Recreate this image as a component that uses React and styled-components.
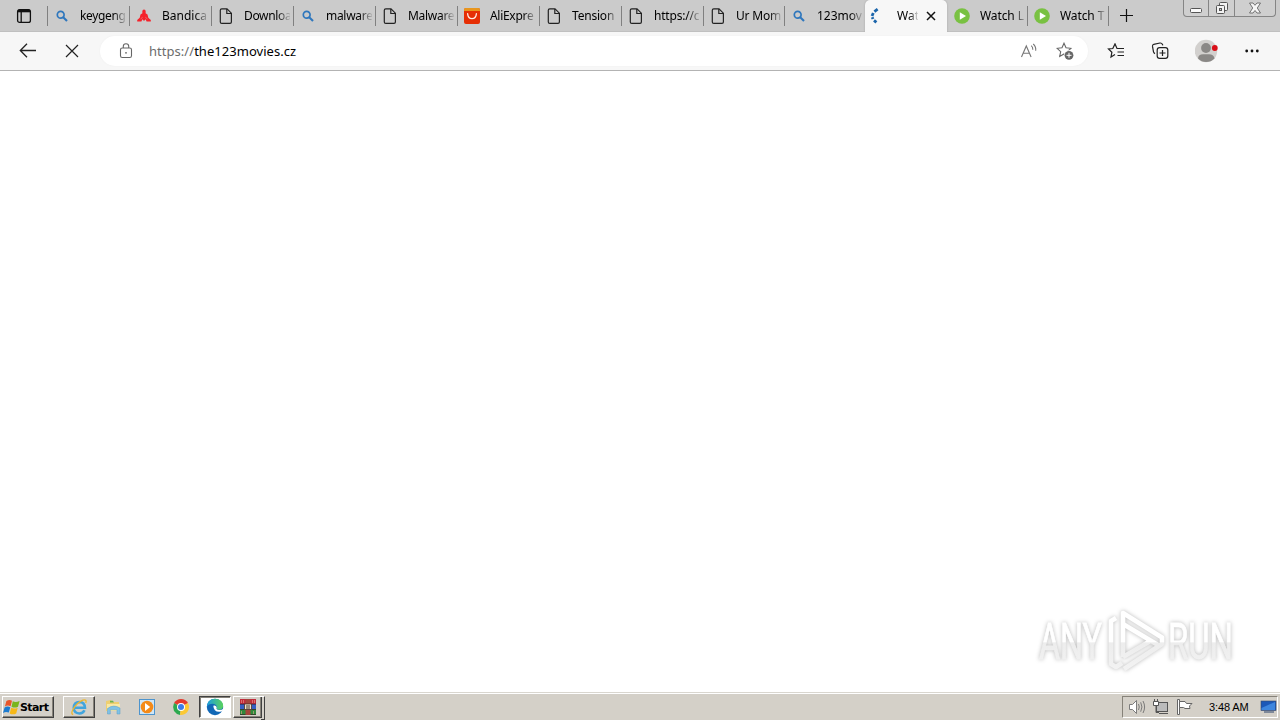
import React from 'react';
import styled, { createGlobalStyle, css } from 'styled-components';

const GlobalStyle = createGlobalStyle`
    * { box-sizing: border-box; }
    body {
        margin: 0;
        background: #fff;
        overflow: hidden;
        font-family: "Noto Sans", "Open Sans", sans-serif;
    }
    svg { display: block; flex: none; }
`

const Screen = styled.div`
    width: 1280px;
    height: 720px;
    display: flex;
    flex-direction: column;
    position: relative;
    overflow: hidden;
`

// tab strip
const TabStrip = styled.div`
    height: 32px;
    flex: none;
    display: flex;
    align-items: flex-start;
    background: #cbcbcb;
    border-bottom: 1px solid #c0c0c0;
`
const TabMenu = styled.div`
    width: 47px;
    height: 32px;
    padding: 8px 0 0 16px;
`
const TabBox = styled.div`
    width: ${p => p.$width}px;
    height: 32px;
    flex: none;
    display: flex;
    align-items: center;
    position: relative;
    padding-left: 6px;
    ${p => p.$line && css`
        &::before {
            content: '';
            position: absolute;
            left: 0;
            top: 6px;
            height: 20px;
            width: 1px;
            background: #808080;
        }
    `}
    ${p => p.$active && css`
        background: #f7f7f7;
        border-radius: 5px 5px 0 0;
        padding-left: 3px;
        box-shadow: 0 0 2px #a0a0a0;
        clip-path: inset(-2px -2px 0 -2px);
    `}
`
const TabEnd = styled(TabBox)`
    padding: 0;
`
const TabIcon = styled.div`
    width: 18px;
    height: 18px;
    flex: none;
    display: flex;
    align-items: center;
    justify-content: center;
`
const TabText = styled.span`
    margin-left: ${p => (p.$active ? 11 : 9)}px;
    width: ${p => (p.$active ? 21 : 46)}px;
    white-space: nowrap;
    font-size: 12px;
    line-height: 18px;
    letter-spacing: ${p => p.$spacing || 0}px;
    color: #000;
    mask-image: linear-gradient(to right, #000 ${p => (p.$active ? 60 : 72)}%, rgba(0, 0, 0, .1));
`
const CloseTab = styled.div`
    margin-left: 8px;
`
const NewTab = styled.div`
    height: 32px;
    padding: 9px 0 0 10px;
    flex: 1;
`
const WindowButtons = styled.div`
    display: flex;
    height: 17px;
    margin-right: 4px;
    border: 1px solid #858585;
    border-top: 0;
    border-radius: 0 0 4px 4px;
    background: #cfcfcf;
`
const WindowButton = styled.div`
    width: ${p => p.$width}px;
    display: flex;
    justify-content: center;
    & + & { border-left: 1px solid #858585; }
`

// toolbar
const Toolbar = styled.div`
    height: 39px;
    flex: none;
    display: flex;
    align-items: center;
    background: #f7f7f7;
    border-bottom: 1px solid #b3b3b3;
    padding-left: 18px;
`
const ToolButton = styled.div`
    width: ${p => p.$width || 44}px;
    display: flex;
    align-items: center;
    padding-left: ${p => p.$pad || 0}px;
`
const AddressBar = styled.div`
    width: 988px;
    height: 30px;
    border-radius: 15px;
    background: #fff;
    box-shadow: 0 0 2px #eee;
    display: flex;
    align-items: center;
    padding-left: 19px;
    padding-right: 14px;
`
const Url = styled.div`
    flex: 1;
    margin-left: 15px;
    font-size: 13px;
    line-height: 18px;
    letter-spacing: 0.04px;
    color: #000;
    white-space: nowrap;
    span { color: #6c6c6c; }
`
const Content = styled.main`
    flex: 1;
    background: #fff;
`
const Watermark = styled.svg`
    position: absolute;
    left: 1030px;
    top: 602px;
    filter: drop-shadow(0 0 2px rgba(0, 0, 0, .28));
`

// taskbar
const TaskBar = styled.div`
    height: 28px;
    flex: none;
    display: flex;
    align-items: flex-start;
    background: #d4d0c8;
    border-top: 1px solid #d9d6cf;
    box-shadow: inset 0 1px 0 #fff;
    padding: 3px 2px 0 2px;
`
const raised = css`
    border: 1px solid;
    border-color: #fff #404040 #404040 #fff;
    box-shadow: inset -1px -1px 0 #868279;
`
const StartButton = styled.div`
    width: 52px;
    height: 22px;
    display: flex;
    align-items: center;
    font-family: "DejaVu Sans", sans-serif;
    font-weight: bold;
    font-size: 11px;
    letter-spacing: -0.6px;
    color: #000;
    ${raised}
`
const TaskList = styled.div`
    display: flex;
    margin-left: 9px;
    gap: 2px;
    flex: 1;
`
const TaskItem = styled.div`
    width: 32px;
    height: 22px;
    display: flex;
    align-items: center;
    justify-content: center;
    position: relative;
    ${p => p.$look === 'raised' && raised}
    ${p => p.$look === 'pressed' && css`
        background: #fff;
        border: 1px solid;
        border-color: #404040 #fff #fff #404040;
        box-shadow: inset 1px 1px 0 #868279;
    `}
    ${p => p.$look === 'stack' && css`
        ${raised}
        width: 29px;
        margin-right: 3px;
        &::after {
            content: '';
            position: absolute;
            top: -1px;
            right: -4px;
            width: 3px;
            height: 22px;
            border-right: 1px solid #404040;
            border-top: 1px solid #fff;
            border-bottom: 1px solid #404040;
        }
    `}
`
const Tray = styled.div`
    width: 156px;
    height: 22px;
    display: flex;
    align-items: center;
    padding-left: 5px;
    border: 1px solid;
    border-color: #868279 #fff #fff #868279;
`
const Clock = styled.div`
    width: 51px;
    margin-left: 15px;
    font-family: "Liberation Sans", Arial, sans-serif;
    font-size: 11px;
    letter-spacing: -0.1px;
    white-space: nowrap;
    color: #000;
`

const SearchIcon = () => (
    <svg width="12" height="12" viewBox="0 0 12 12" fill="none" stroke="#2f77bd">
        <circle cx="4.7" cy="4.7" r="3.4" strokeWidth="1.7" />
        <path d="M7.2 7.2L11 11" strokeWidth="2.1" />
    </svg>
)

const PageIcon = () => (
    <svg width="14" height="16" viewBox="0 0 14 16" fill="none" stroke="#222" strokeWidth="1.2">
        <path d="M2.8 .8H8L12.4 5.2V13.9Q12.4 15.3 11 15.3H2.8Q1.3 15.3 1.3 13.9V2.2Q1.3 .8 2.8 .8Z" />
        <path d="M7.8 1V5.5H12.2" />
    </svg>
)

const BandicamIcon = () => (
    <svg width="14" height="14" viewBox="0 0 14 14" fill="#f5222b">
        <path d="M7 .4Q8.7 .4 8.7 2.6L8.6 4.2L10.5 5.5L11.3 8.7L13.8 11V12.6H9.6L8.6 10.2L7 12L5.4 10.2L4.4 12.6H.2V11L2.7 8.7L3.5 5.5L5.4 4.2L5.3 2.6Q5.3 .4 7 .4Z" />
        <path d="M3.6 9.9L5.6 8.3M10.4 9.9L8.4 8.3" fill="none" stroke="#e0a0a0" strokeWidth=".6" />
    </svg>
)

const AliIcon = () => (
    <svg width="16" height="16" viewBox="0 0 16 16">
        <rect width="16" height="16" rx="2" fill="#e62e04" />
        <path d="M1.5 0H14.5Q16 0 16 1.5V3H0V1.5Q0 0 1.5 0Z" fill="#e8961d" />
        <path d="M3.6 5.6Q4 10.6 8 10.6Q12 10.6 12.4 5.6" fill="none" stroke="#ffe9e0" strokeWidth="1.3" strokeLinecap="round" />
    </svg>
)

const PlayIcon = () => (
    <svg width="16" height="16" viewBox="0 0 16 16">
        <circle cx="8" cy="8" r="7.8" fill="#79c142" />
        <path d="M5.8 4.2L12 8L5.8 11.8Z" fill="#fff" />
    </svg>
)

const LoadingIcon = () => (
    <svg width="18" height="16" viewBox="0 0 18 16" fill="none" stroke="#1b65ab" strokeWidth="2.8">
        <path d="M9.6 1.2L6.4 3.6" />
        <path d="M5.3 5L4 8" />
        <path d="M4.2 9.2L5 11" />
        <path d="M6 12.4L8.4 14.4" />
    </svg>
)

const icons = {
    search: SearchIcon,
    page: PageIcon,
    bandicam: BandicamIcon,
    ali: AliIcon,
    play: PlayIcon,
    loading: LoadingIcon,
}

const tabs = [
    { icon: 'search', title: 'keygeng', width: 82, spacing: -0.35 },
    { icon: 'bandicam', title: 'Bandica', width: 82 },
    { icon: 'page', title: 'Downloa', width: 82, spacing: -0.35 },
    { icon: 'search', title: 'malware', width: 82, spacing: -0.3 },
    { icon: 'page', title: 'Malware', width: 82, spacing: -0.3 },
    { icon: 'ali', title: 'AliExpre', width: 82, spacing: -0.3 },
    { icon: 'page', title: 'Tension l', width: 82, spacing: -0.2 },
    { icon: 'page', title: 'https://c', width: 82, spacing: -0.2 },
    { icon: 'page', title: 'Ur Mom', width: 81, spacing: -0.2 },
    { icon: 'search', title: '123mov', width: 81 },
    { icon: 'loading', title: 'Wat', width: 82, active: true },
    { icon: 'play', title: 'Watch L', width: 80, noLine: true, spacing: -0.1 },
    { icon: 'play', title: 'Watch T', width: 81, spacing: -0.1 },
]

function Tab({ tab }) {
    const Icon = icons[tab.icon]
    return (
        <TabBox $width={tab.width} $active={tab.active} $line={!tab.active && !tab.noLine}>
            <TabIcon><Icon /></TabIcon>
            <TabText $active={tab.active} $spacing={tab.spacing}>{tab.title}</TabText>
            {tab.active && (
                <CloseTab>
                    <svg width="10" height="10" viewBox="0 0 10 10" stroke="#111" strokeWidth="1.5">
                        <path d="M1 1L9 9M9 1L1 9" />
                    </svg>
                </CloseTab>
            )}
        </TabBox>
    )
}

function Tabs() {
    return (
        <TabStrip>
            <TabMenu>
                <svg width="16" height="16" viewBox="0 0 16 16" fill="none" stroke="#111" strokeWidth="1.3">
                    <rect x="1.6" y="1.6" width="12.8" height="12.8" rx="2" />
                    <path d="M2 3H14" strokeWidth="2.6" />
                    <path d="M5.2 4V14" />
                </svg>
            </TabMenu>
            {tabs.map((tab, i) => <Tab key={i} tab={tab} />)}
            <TabEnd $width={1} $line />
            <NewTab>
                <svg width="14" height="14" viewBox="0 0 14 14" stroke="#111" strokeWidth="1.2">
                    <path d="M7.5 0V13M1 6.5H14" />
                </svg>
            </NewTab>
            <WindowButtons>
                <WindowButton $width={24}>
                    <svg width="14" height="16" viewBox="0 0 14 16">
                        <rect x="1.5" y="8.5" width="11" height="4" rx="1" fill="#fafafa" stroke="#555" />
                    </svg>
                </WindowButton>
                <WindowButton $width={26}>
                    <svg width="14" height="16" viewBox="0 0 14 16" fill="#f2f2f2" stroke="#555">
                        <rect x="4.5" y="2.5" width="8" height="8" rx="1" />
                        <rect x="1.5" y="5.5" width="8" height="8" rx="1" />
                        <rect x="4.5" y="8.5" width="2" height="2" fill="#cfcfcf" />
                    </svg>
                </WindowButton>
                <WindowButton $width={41}>
                    <svg width="14" height="16" viewBox="0 0 14 16" fill="#f6f6f6" stroke="#666" strokeWidth=".9">
                        <path d="M1.5 3H5L7 5.3L9 3H12.5L9.3 8L12.5 13H9L7 10.5L5 13H1.5L4.7 8Z" />
                    </svg>
                </WindowButton>
            </WindowButtons>
        </TabStrip>
    )
}

const starPath = 'M8 1.2L10 5.7L14.9 6.3L11.3 9.6L12.3 14.5L8 12L3.7 14.5L4.7 9.6L1.1 6.3L6 5.7Z'

function NavBar() {
    return (
        <Toolbar>
            <ToolButton $pad={1} $width={46}>
                <svg width="18" height="16" viewBox="0 0 18 16" fill="none" stroke="#222" strokeWidth="1.3">
                    <path d="M17 7.5H1.5M8 .8L1.3 7.5L8 14.2" />
                </svg>
            </ToolButton>
            <ToolButton $pad={1} $width={36}>
                <svg width="14" height="14" viewBox="0 0 14 14" stroke="#222" strokeWidth="1.2">
                    <path d="M1 1L13 13M13 1L1 13" />
                </svg>
            </ToolButton>
            <AddressBar>
                <svg width="15" height="17" viewBox="0 0 15 17" fill="none" stroke="#666" strokeWidth="1.1">
                    <rect x="1.5" y="5" width="11" height="9.5" rx="1.8" />
                    <path d="M4.3 5V3.3Q4.3 .8 7 .8Q9.7 .8 9.7 3.3V5" />
                    <circle cx="7" cy="9.8" r=".9" fill="#666" stroke="none" />
                </svg>
                <Url><span>https://</span>the123movies.cz</Url>
                <ToolButton $width={36}>
                    <svg width="18" height="16" viewBox="0 0 18 16" fill="none" stroke="#777" strokeWidth="1.1">
                        <path d="M1.5 14L6.3 3L11.1 14M3.2 10.2H9.4" />
                        <path d="M11.2 2.7Q13 4.2 12.8 6.8M13.2 1Q16.2 3.5 15.7 7.8" />
                    </svg>
                </ToolButton>
                <svg width="18" height="18" viewBox="0 0 18 18" fill="none" stroke="#666">
                    <path d={starPath} strokeWidth="1.1" />
                    <circle cx="13" cy="13.3" r="5" fill="#fff" stroke="none" />
                    <circle cx="13" cy="13.3" r="4.4" fill="#666" stroke="none" />
                    <path d="M13 10.8V15.8M10.5 13.3H15.5" stroke="#fff" />
                </svg>
            </AddressBar>
            <ToolButton $pad={19} $width={63}>
                <svg width="18" height="16" viewBox="0 0 18 16" fill="none" stroke="#222" strokeWidth="1.2">
                    <path d="M15 5.5H10L8 .9L5.8 5.5L1.5 6L4.9 9.2L4 14L8 11.5" />
                    <path d="M11 5.5H17M10.5 9H17M10.5 12.5H17" />
                </svg>
            </ToolButton>
            <ToolButton $width={44}>
                <svg width="18" height="18" viewBox="0 0 18 18" fill="none" stroke="#222" strokeWidth="1.2">
                    <path d="M4 11.6Q2.8 11 2.5 9.8L1.5 4.4Q1.3 2.8 2.8 2.3L8.9 1Q10.8 .8 11.5 2.4L11.8 3.4" />
                    <rect x="6.2" y="5.6" width="10.6" height="10.8" rx="2.4" fill="#f7f7f7" />
                    <path d="M11.5 8V14M8.5 11H14.5" />
                </svg>
            </ToolButton>
            <ToolButton $width={50}>
                <svg width="25" height="24" viewBox="0 0 25 24">
                    <circle cx="11" cy="12" r="11.2" fill="#d2d0ce" />
                    <circle cx="11" cy="9" r="4.9" fill="#8a8886" />
                    <path d="M3 19.5Q3.5 15.3 8 15.3H14Q18.5 15.3 19.6 19.5Q16 23 11 23Q6.5 23 3 19.5Z" fill="#8a8886" />
                    <circle cx="19.8" cy="9" r="2.9" fill="#d90f18" />
                </svg>
            </ToolButton>
            <svg width="14" height="4" viewBox="0 0 14 4" fill="#111">
                <circle cx="1.7" cy="2" r="1.4" />
                <circle cx="7" cy="2" r="1.4" />
                <circle cx="12.3" cy="2" r="1.4" />
            </svg>
        </Toolbar>
    )
}

function AnyRun() {
    return (
        <Watermark width="215" height="76" viewBox="0 0 215 76">
            <defs>
                <linearGradient id="fade" gradientUnits="userSpaceOnUse" x1="0" y1="0" x2="0" y2="76">
                    <stop offset=".52" stopColor="#fff" />
                    <stop offset=".54" stopColor="#ededed" />
                    <stop offset="1" stopColor="#f4f4f4" />
                </linearGradient>
            </defs>
            <g fill="url(#fade)" stroke="url(#fade)" strokeWidth=".8" fontFamily="Roboto, sans-serif" fontSize="50">
                <text x="9" y="57" textLength="63" lengthAdjust="spacingAndGlyphs">ANY</text>
                <text x="138" y="57" textLength="65" lengthAdjust="spacingAndGlyphs">RUN</text>
            </g>
            <g fill="none" stroke="url(#fade)" strokeWidth="4.6" strokeLinejoin="round">
                <path d="M93 55V11L132 35.5V42L94 67" />
                <path d="M93 22L128 43M93 55L122 38" />
                <path d="M86 16L81 19V62L86 65L92 61" />
            </g>
        </Watermark>
    )
}

const WindowsLogo = () => (
    <svg width="17" height="17" viewBox="0 0 17 17">
        <path d="M3.4 2Q6.4 0 9 1.7L7.6 7.2Q4.7 5.6 1.9 7.4Z" fill="#e9562b" />
        <path d="M9.8 2.2Q12.5 3.8 16.6 2L15 7.7Q11.7 9.4 8.5 7.7Z" fill="#79b51c" />
        <path d="M1.6 8.4Q4.5 6.6 7.3 8.2L5.8 13.6Q3 12.2 0 13.9Z" fill="#1c7bd0" />
        <path d="M8.2 8.8Q11.3 10.4 14.7 8.7L13.2 14.4Q9.8 16.1 6.7 14.4Z" fill="#f6b817" />
    </svg>
)

const IeIcon = () => (
    <svg width="18" height="18" viewBox="0 0 18 18" fill="none">
        <path d="M14.5 12.2Q13 15.4 9.4 15.4Q4 15.2 3.7 9.7Q4 4.2 9.3 4Q14.8 4.2 15 9.8H5" stroke="#42a5dd" strokeWidth="2.5" />
        <path d="M3.2 16.5Q.4 16 3.1 11.3Q7.2 4.6 12.8 2.2Q17.2.9 15.8 5" stroke="#edb62c" strokeWidth="1.3" />
    </svg>
)

const FolderIcon = () => (
    <svg width="18" height="18" viewBox="0 0 18 18">
        <path d="M2 3L7 2L8.5 4H15V13H2Z" fill="#eecf70" />
        <path d="M3 6H16V13H3Z" fill="#f8e8a4" />
        <path d="M6 2.7H9L10 4.5H6Z" fill="#6ab150" />
        <path d="M3.5 10.5Q9.5 6 16 10V16H13V11.8H6.3V16H3.5Z" fill="#7fc2e6" stroke="#5a9dc6" strokeWidth=".5" />
    </svg>
)

const MediaIcon = () => (
    <svg width="18" height="18" viewBox="0 0 18 18">
        <rect x="1.5" y="1.5" width="15" height="15" fill="#cfe6f7" stroke="#4d94cd" />
        <circle cx="9" cy="9" r="6.3" fill="#f48a18" />
        <path d="M7 5L12.2 9L7 13Z" fill="#fff" />
    </svg>
)

const ChromeIcon = () => (
    <svg width="18" height="18" viewBox="0 0 18 18">
        <path d="M9 9L2 5Q4.6 1 9 1Q13.6 1 16 5Z" fill="#e33b2e" />
        <path d="M9 9L2 5Q.2 9 2 13Q4.2 16.3 8 17Z" fill="#2da94f" />
        <path d="M9 9L16 5Q18 9 16 13Q13.5 17.2 8 17Z" fill="#fcc934" />
        <circle cx="9" cy="9" r="4" fill="#fff" />
        <circle cx="9" cy="9" r="3" fill="#3b7de9" />
    </svg>
)

const EdgeIcon = () => (
    <svg width="18" height="18" viewBox="0 0 18 18">
        <defs>
            <linearGradient id="edgeTop" x1="0" y1="0" x2="1" y2="0">
                <stop offset="0" stopColor="#1c9de0" />
                <stop offset="1" stopColor="#5bd35a" />
            </linearGradient>
        </defs>
        <circle cx="9" cy="9" r="8.2" fill="#1268b6" />
        <path d="M.8 9Q1 1 9 .8Q16.7 1 17.2 8Q16.8 11.6 13 11.7Q9.8 11.6 10.7 9.7Q11 6.2 7 5.7Q2.5 5.6.8 9Z" fill="url(#edgeTop)" />
        <path d="M7.3 7.7Q9.7 6.8 10.7 9.2Q9.5 11.5 13 12Q15.3 12.1 18 10.5Q17 14 13.5 13.8Q7.6 14 7.3 7.7Z" fill="#fff" />
    </svg>
)

const RarIcon = () => (
    <svg width="18" height="16" viewBox="0 0 18 16">
        <path d="M1 0H17V5H1Z" fill="#c22a3b" />
        <path d="M1 5H17V10H1Z" fill="#355ec2" />
        <path d="M1 10H17V16H1Z" fill="#2f8a3b" />
        <path d="M1 5.2H17M1 10.5H17M1 15.6H17" stroke="#342326" strokeWidth=".7" />
        <path d="M6.5 0H11.5V16H6.5Z" fill="#a4453b" />
        <path d="M5.5 5H12.5V10.5H5.5Z" fill="#eee6cb" stroke="#46312b" strokeWidth=".8" />
        <path d="M8 6V10M10 6V10" stroke="#46312b" />
        <path d="M2.5 1V4M4.5 1V4M13.5 1V4M15.5 1V4M2.5 12V15M14.5 12V15" stroke="#e7a090" strokeWidth=".6" />
    </svg>
)

function Taskbar() {
    return (
        <TaskBar>
            <StartButton><WindowsLogo /><span>Start</span></StartButton>
            <TaskList>
                <TaskItem $look="raised"><IeIcon /></TaskItem>
                <TaskItem><FolderIcon /></TaskItem>
                <TaskItem><MediaIcon /></TaskItem>
                <TaskItem><ChromeIcon /></TaskItem>
                <TaskItem $look="pressed"><EdgeIcon /></TaskItem>
                <TaskItem $look="stack"><RarIcon /></TaskItem>
            </TaskList>
            <Tray>
                <svg width="19" height="16" viewBox="0 0 19 16" fill="#fff" stroke="#6f6f6f" strokeWidth=".9">
                    <path d="M1.5 5.5H4.5L8.5 1.5V14.5L4.5 10.5H1.5Z" />
                    <path d="M10.5 5Q12 8 10.5 11M12.7 3.3Q15.2 8 12.7 12.7M15 2Q18.2 8 15 14" fill="none" />
                </svg>
                <TrayIcon $gap={5} width="20" height="16" viewBox="0 0 20 16" fill="#fff" stroke="#555">
                    <rect x="4.5" y="3.5" width="11" height="9" fill="#bbb" />
                    <path d="M7 14.5H16M1.5 2.5H6.5V6.5H1.5ZM2.5 0V2M5.5 0V2" />
                    <path d="M4 7V13.5H7" fill="none" />
                </TrayIcon>
                <TrayIcon $gap={4} width="18" height="16" viewBox="0 0 18 16" fill="#fff" stroke="#666">
                    <path d="M1.5 .5H3.5V15.5H1.5Z" />
                    <path d="M3.5 2.5H9L10.5 4.5H16L13.5 7L14 9.5H9L7.5 8.5H3.5Z" />
                </TrayIcon>
                <Clock>3:48 AM</Clock>
                <svg width="17" height="14" viewBox="0 0 17 14">
                    <rect x="1" y="1" width="15" height="9.5" fill="#1c58b8" stroke="#3b4a66" strokeWidth=".6" />
                    <path d="M1.5 8L15 2V10H1.5Z" fill="#3e86de" />
                    <path d="M4 12H14" stroke="#5b6b86" strokeWidth="1.4" />
                </svg>
            </Tray>
        </TaskBar>
    )
}

const TrayIcon = styled.svg`
    margin-left: ${p => p.$gap}px;
`

export default function App() {
    return (
        <Screen>
            <GlobalStyle />
            <Tabs />
            <NavBar />
            <Content />
            <AnyRun />
            <Taskbar />
        </Screen>
    )
}
